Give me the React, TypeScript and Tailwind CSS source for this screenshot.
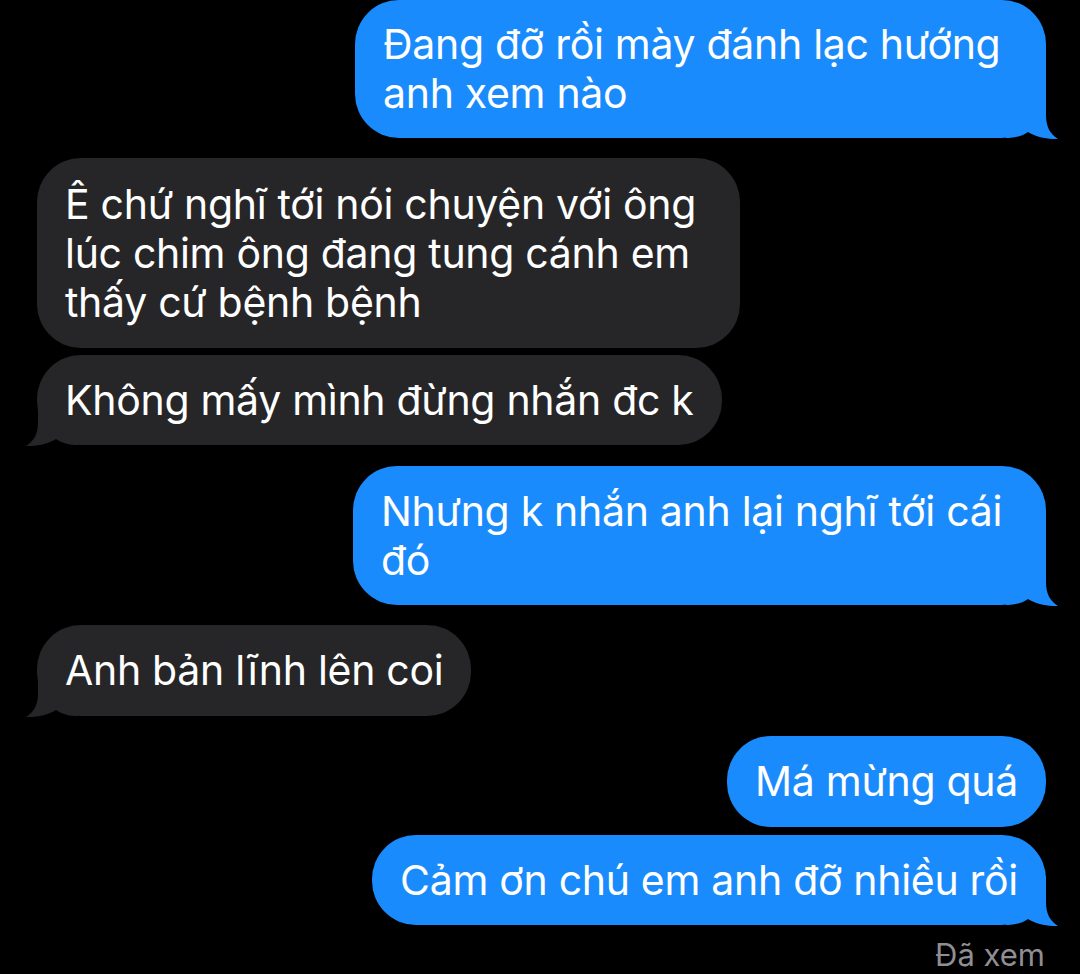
import React from "react";

const BLUE = "#1a8bfc";
const GRAY = "#262628";

function TailRight({ color }: { color: string }) {
  return (
    <svg
      width="52"
      height="50"
      viewBox="0 0 52 50"
      className="absolute right-[-12px] bottom-[-1px] pointer-events-none"
    >
      <path
        d="M0 0 H40 V26 C40 38 44 45 52 50 C42 50.5 30 48 22 43 C16 47 9 49 2 49 H0 Z"
        fill={color}
      />
    </svg>
  );
}

function TailLeft({ color }: { color: string }) {
  return (
    <svg
      width="52"
      height="50"
      viewBox="0 0 52 50"
      className="absolute left-[-11px] bottom-[-1px] pointer-events-none"
    >
      <g transform="translate(52 0) scale(-1 1)">
        <path
          d="M0 0 H40 V26 C40 38 44 45 52 50 C42 50.5 30 48 22 43 C16 47 9 49 2 49 H0 Z"
          fill={color}
        />
      </g>
    </svg>
  );
}

type BubbleProps = {
  lines: string[];
  me?: boolean;
  tail?: boolean;
  width?: string;
  height: string;
  mt: string;
};

function Bubble({ lines, me, tail, width, height, mt }: BubbleProps) {
  const color = me ? BLUE : GRAY;
  return (
    <div className={`flex ${me ? "justify-end" : "justify-start"} ${mt}`}>
      <div
        className={`relative rounded-[44px] px-[28px] flex flex-col justify-center text-white text-[41px] leading-[49px] tracking-[-0.3px] whitespace-nowrap ${width ?? ""} ${height} ${
          me ? "bg-[#1a8bfc]" : "bg-[#262628]"
        }`}
      >
        {tail && (me ? <TailRight color={color} /> : <TailLeft color={color} />)}
        {lines.map((l, i) => (
          <span key={i} className="relative">
            {l}
          </span>
        ))}
      </div>
    </div>
  );
}

export default function App() {
  return (
    <div
      className="w-[1080px] h-[974px] bg-black overflow-hidden flex flex-col pl-[37px] pr-[34px]"
      style={{ fontFamily: "Inter, 'Noto Sans', sans-serif" }}
    >
      <Bubble
        me
        tail
        mt="mt-0"
        width="w-[691px]"
        height="h-[138px]"
        lines={["Đang đỡ rồi mày đánh lạc hướng", "anh xem nào"]}
      />
      <Bubble
        mt="mt-[20px]"
        width="w-[703px]"
        height="h-[190px]"
        lines={["Ê chứ nghĩ tới nói chuyện với ông", "lúc chim ông đang tung cánh em", "thấy cứ bệnh bệnh"]}
      />
      <Bubble
        tail
        mt="mt-[7px]"
        height="h-[90px]"
        lines={["Không mấy mình đừng nhắn đc k"]}
      />
      <Bubble
        me
        tail
        mt="mt-[21px]"
        width="w-[693px]"
        height="h-[139px]"
        lines={["Nhưng k nhắn anh lại nghĩ tới cái", "đó"]}
      />
      <Bubble
        tail
        mt="mt-[20px]"
        height="h-[91px]"
        lines={["Anh bản lĩnh lên coi"]}
      />
      <Bubble
        me
        mt="mt-[20px]"
        height="h-[91px]"
        lines={["Má mừng quá"]}
      />
      <Bubble
        me
        tail
        mt="mt-[8px]"
        height="h-[90px]"
        lines={["Cảm ơn chú em anh đỡ nhiều rồi"]}
      />
      <div className="flex justify-end mt-[11px] pr-[1px] text-[31px] leading-[38px] text-[#8e8e93]">
        Đã xem
      </div>
    </div>
  );
}
